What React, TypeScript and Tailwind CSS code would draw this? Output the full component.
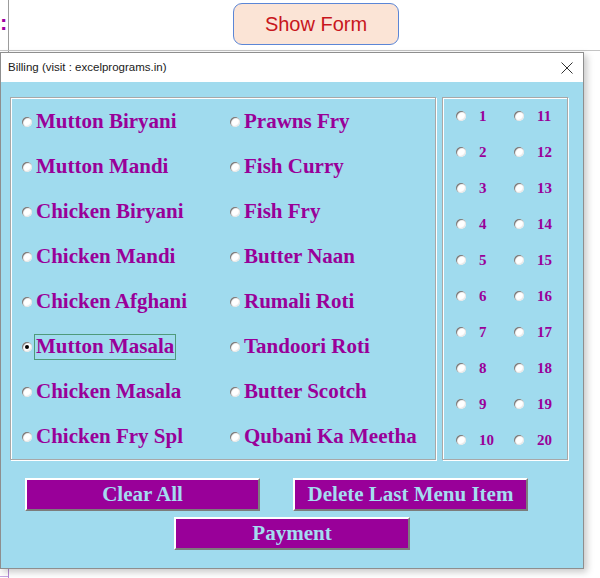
import React from "react";

const leftCol1 = [
  "Mutton Biryani",
  "Mutton Mandi",
  "Chicken Biryani",
  "Chicken Mandi",
  "Chicken Afghani",
  "Mutton Masala",
  "Chicken Masala",
  "Chicken Fry Spl",
];
const leftCol2 = [
  "Prawns Fry",
  "Fish Curry",
  "Fish Fry",
  "Butter Naan",
  "Rumali Roti",
  "Tandoori Roti",
  "Butter Scotch",
  "Qubani Ka Meetha",
];

function Radio({ checked = false }: { checked?: boolean }) {
  return (
    <span className="relative inline-flex items-center justify-center w-[10px] h-[10px] shrink-0 rounded-full bg-white shadow-[inset_1px_1px_1px_#6e6e6e,inset_-1px_-1px_1px_#e8e8e8]">
      {checked && <span className="w-[4px] h-[4px] rounded-full bg-black" />}
    </span>
  );
}

function MenuItem({ label, selected = false }: { label: string; selected?: boolean }) {
  return (
    <div className="h-[45px] flex items-center">
      <Radio checked={selected} />
      <span
        className={
          "ml-[2px] px-[1px] h-[26px] flex items-center border leading-none " +
          (selected ? "border-[#4f9a7a]" : "border-transparent")
        }
      >
        {label}
      </span>
    </div>
  );
}

function NumItem({ n }: { n: number }) {
  return (
    <div className="h-[36px] flex items-center">
      <Radio />
      <span className="ml-[13px] leading-none">{n}</span>
    </div>
  );
}

function PurpleButton({ label, className = "" }: { label: string; className?: string }) {
  return (
    <div
      className={
        "w-[235px] h-[33px] bg-[#990099] border-2 border-t-white border-l-white border-r-[#7c7c7c] border-b-[#7c7c7c] flex items-center justify-center text-[#a4dcef] text-[21px] font-bold leading-none " +
        className
      }
    >
      {label}
    </div>
  );
}

export default function App() {
  return (
    <div
      className="relative w-[600px] h-[578px] bg-white overflow-hidden"
      style={{ fontFamily: "'Liberation Serif', 'Times New Roman', serif" }}
    >
      {/* worksheet bits behind the dialog */}
      <div className="absolute left-[8px] top-0 w-px h-[52px] bg-[#9c9c9c]" />
      <div
        className="absolute left-0 top-[12px] text-[22px] font-bold text-[#a000a0] leading-none"
        style={{ fontFamily: "'Liberation Sans', Arial, sans-serif" }}
      >
        :
      </div>
      <div className="absolute left-0 top-[50px] w-[600px] h-px bg-[#c4c4c4]" />
      <div className="absolute left-[8px] top-[569px] w-px h-[9px] bg-[#b58ad6]" />
      <div className="absolute left-0 top-[576px] w-[8px] h-px bg-[#c9a7e2]" />

      {/* Show Form button row */}
      <div className="h-[52px] flex items-start pl-[233px] pt-[3px]">
        <div
          className="w-[166px] h-[42px] rounded-[9px] border-[1.5px] border-[#5b86d6] bg-[#fbe4d6] flex items-center justify-center text-[#c8161d] text-[20px] leading-none"
          style={{ fontFamily: "'Liberation Sans', Arial, sans-serif" }}
        >
          Show Form
        </div>
      </div>

      {/* Dialog */}
      <div className="relative w-[584px] h-[517px] border border-[#8e8e8e] flex flex-col shadow-[3px_3px_7px_rgba(0,0,0,0.22)]">
        <div
          className="h-[29px] bg-white flex items-center justify-between pl-[7px] pr-[9px]"
          style={{ fontFamily: "'Liberation Sans', Arial, sans-serif" }}
        >
          <span className="text-[11.5px] text-[#1a1a1a] leading-none">Billing (visit : excelprograms.in)</span>
          <svg width="12" height="12" viewBox="0 0 12 12" className="mr-[1px]">
            <path d="M0.5 0.5 L11.5 11.5 M11.5 0.5 L0.5 11.5" stroke="#333" strokeWidth="1" fill="none" />
          </svg>
        </div>
        <div className="flex-1 bg-[#a0dbee] pt-[15px] pl-[9px]">
          <div className="flex gap-[6px]">
            {/* Menu frame */}
            <div className="w-[426px] h-[363px] border border-[#a8a8a8] shadow-[inset_1px_1px_0_#ffffff,1px_1px_0_#ffffff] flex pt-[1px] pl-[11px] text-[21px] font-bold text-[#990099]">
              <div className="w-[208px] flex flex-col">
                {leftCol1.map((l) => (
                  <MenuItem key={l} label={l} selected={l === "Mutton Masala"} />
                ))}
              </div>
              <div className="flex flex-col">
                {leftCol2.map((l) => (
                  <MenuItem key={l} label={l} />
                ))}
              </div>
            </div>
            {/* Table number frame */}
            <div className="w-[126px] h-[363px] border border-[#a8a8a8] shadow-[inset_1px_1px_0_#ffffff,1px_1px_0_#ffffff] flex pl-[13px] text-[15px] font-bold text-[#990099]">
              <div className="w-[58px] flex flex-col">
                {[1, 2, 3, 4, 5, 6, 7, 8, 9, 10].map((n) => (
                  <NumItem key={n} n={n} />
                ))}
              </div>
              <div className="flex flex-col">
                {[11, 12, 13, 14, 15, 16, 17, 18, 19, 20].map((n) => (
                  <NumItem key={n} n={n} />
                ))}
              </div>
            </div>
          </div>
          <div className="flex gap-[33px] pl-[15px] mt-[18px]">
            <PurpleButton label="Clear All" />
            <PurpleButton label="Delete Last Menu Item" />
          </div>
          <div className="flex pl-[164px] mt-[6px]">
            <PurpleButton label="Payment" className="w-[236px]" />
          </div>
        </div>
      </div>
    </div>
  );
}
